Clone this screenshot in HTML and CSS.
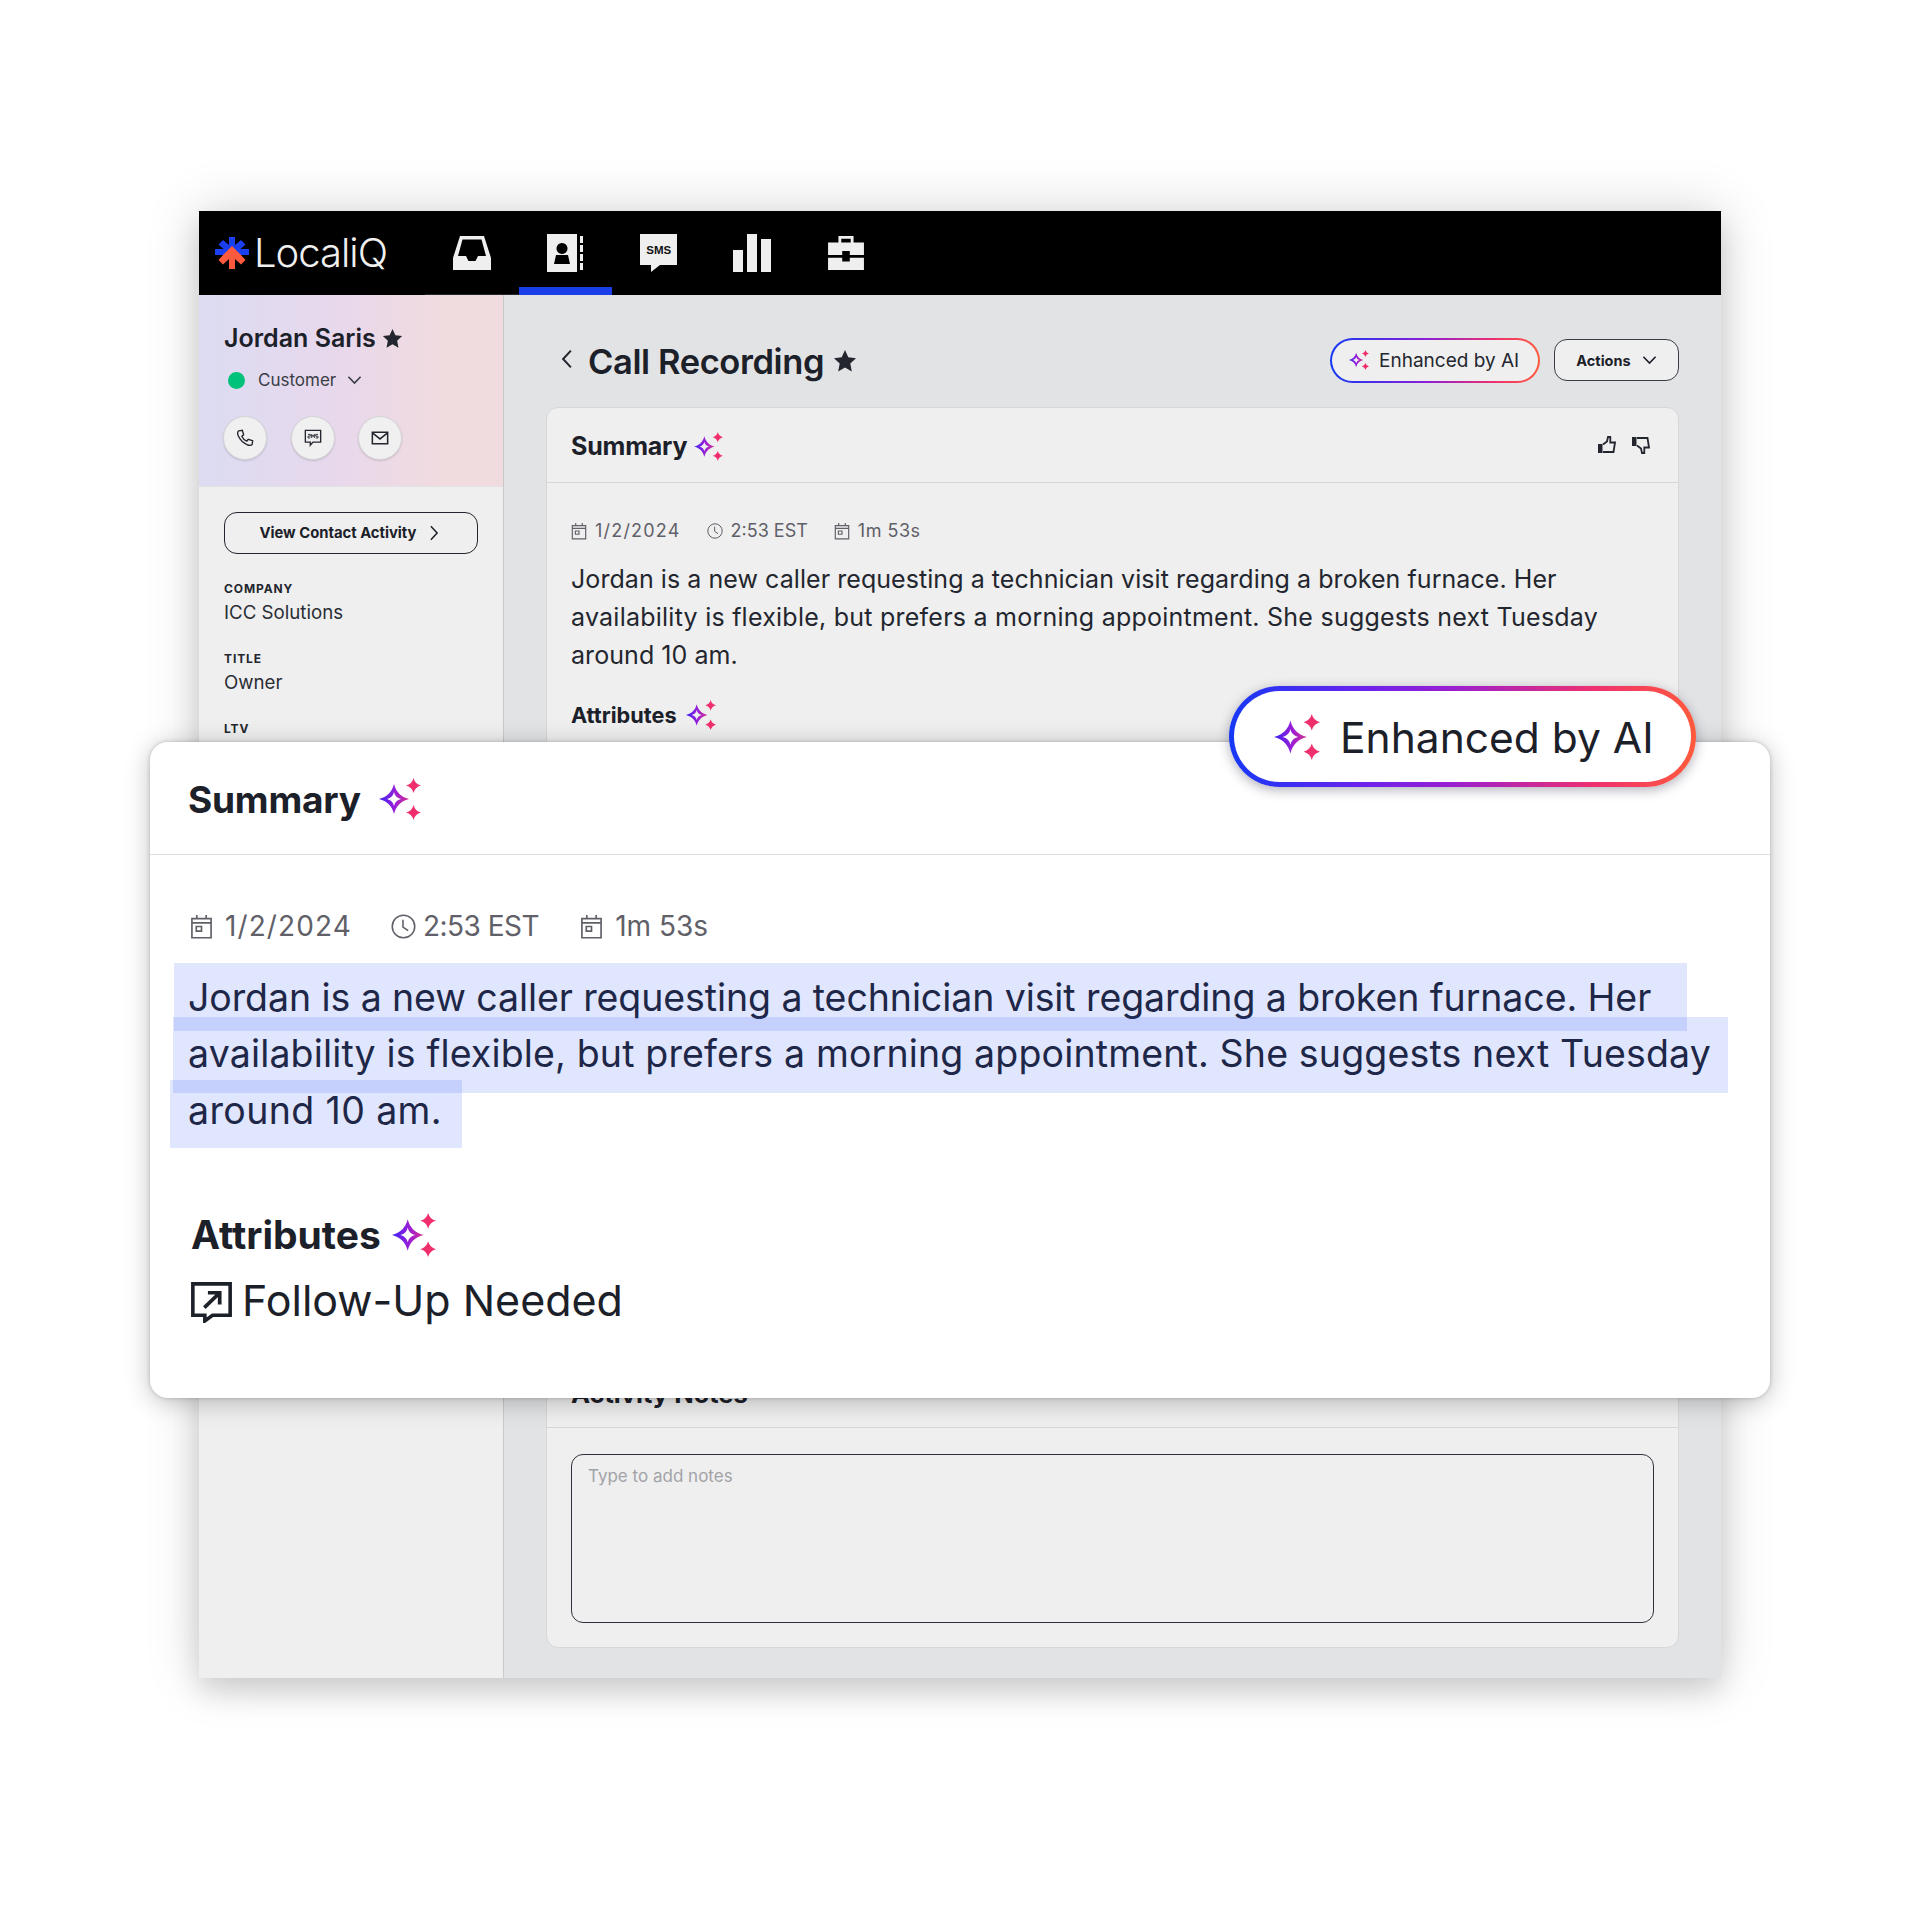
FILE: index.html
```html
<!DOCTYPE html>
<html lang="en">
<head>
<meta charset="utf-8">
<title>LocaliQ Call Recording</title>
<link rel="stylesheet" href="styles.css">
</head>
<body>
<svg class="defs" width="0" height="0" aria-hidden="true">
  <defs>
    <linearGradient id="sg" x1="0" y1="0" x2="1" y2="0">
      <stop offset="0" stop-color="#3b22f5"/><stop offset=".55" stop-color="#9a1fd6"/><stop offset="1" stop-color="#d4308f"/>
    </linearGradient>
    <symbol id="sparkle" viewBox="0 0 42 42">
      <path fill="url(#sg)" fill-rule="evenodd" d="M15 6C17 14 22 19 30 21C22 23 17 28 15 36C13 28 8 23 0 21C8 19 13 14 15 6ZM15 14C14.300 17.500 12 20 8 21C12 22 14.300 24.500 15 28C15.700 24.500 18 22 22 21C18 20 15.700 17.500 15 14Z"/>
      <path fill="#ef2f6c" d="M34.500 0C35.500 4 38 6.500 42 7.500C38 8.500 35.500 11 34.500 15C33.500 11 31 8.500 27 7.500C31 6.500 33.500 4 34.500 0Z"/>
      <path fill="#ef2f6c" d="M34.500 27C35.500 31 38 33.500 42 34.500C38 35.500 35.500 38 34.500 42C33.500 38 31 35.500 27 34.500C31 33.500 33.500 31 34.500 27Z"/>
    </symbol>
    <symbol id="cal" viewBox="0 0 22 24">
      <path fill="none" stroke="currentColor" stroke-width="1.600" d="M1.800 4.500H20.200V22.800H1.800ZM1.800 8.500H20.200M6.500 1V4.500M15.500 1V4.500M6 12H11V16.500H6Z"/>
    </symbol>
    <symbol id="clock" viewBox="0 0 24 24">
      <circle cx="12" cy="12" r="10.800" fill="none" stroke="currentColor" stroke-width="1.500"/>
      <path fill="none" stroke="currentColor" stroke-width="1.500" d="M11.500 5.500V12.500L16.500 16"/>
    </symbol>
    <symbol id="star" viewBox="0 0 24 24">
      <path fill="currentColor" d="M12 1L15.300 8.300L23 9.200L17.300 14.600L18.800 22.500L12 18.500L5.200 22.500L6.700 14.600L1 9.200L8.700 8.300Z"/>
    </symbol>
    <symbol id="chev" viewBox="0 0 16 10">
      <path fill="none" stroke="currentColor" stroke-width="1.700" d="M1.500 1.500L8 8.300L14.500 1.500"/>
    </symbol>
    <symbol id="chevr" viewBox="0 0 10 18">
      <path fill="none" stroke="currentColor" stroke-width="1.700" d="M1.500 1.500L8.500 9L1.500 16.500"/>
    </symbol>
    <symbol id="chevl" viewBox="0 0 10 18">
      <path fill="none" stroke="currentColor" stroke-width="1.800" d="M8.500 1.500L1.500 9L8.500 16.500"/>
    </symbol>
    <symbol id="thumb" viewBox="0 0 18 18">
      <path fill="currentColor" d="M0 8H4.500V17H0Z"/>
      <path fill="none" stroke="currentColor" stroke-width="1.800" d="M5 8.500L9 5.500L10 1H12.300V6.500H17L15.500 16H5"/>
    </symbol>
  </defs>
</svg>

<main class="stage">
  <div class="window">
    <nav class="topbar">
      <div class="logo">
        <svg class="logo-mark" viewBox="0 0 34 32" aria-hidden="true">
          <path fill="#1a3ff0" d="M14 0H20V8L26 3L30.500 7.500L25.500 12H34V18H0V12H8.500L3.500 7.500L8 3L14 8Z"/>
          <path fill="#ff5a3c" d="M17 9L26 18L30.500 23L26 27.500L20 22V32H14V22L8 27.500L3.500 23L8 18Z"/>
        </svg>
        <span class="logo-text">LocaliQ</span>
      </div>
      <div class="tabs">
        <div class="tab tab-idle">
          <svg class="tab-icon" viewBox="0 0 38 34" aria-hidden="true"><path fill="#efefef" fill-rule="evenodd" d="M7 0H31L38 22V34H0V22ZM9.500 3.500L5 20H13L15.500 25H22.500L25 20H33L28.500 3.500Z"/></svg>
        </div>
        <div class="tab tab-active">
          <svg class="tab-icon tall" viewBox="0 0 36 38" aria-hidden="true"><path fill="#efefef" fill-rule="evenodd" d="M0 0H30V38H0ZM15 9A5.500 5.500 0 1 0 15.010 9ZM7 30H23L21 21H9Z"/><path fill="#efefef" d="M33 2H36V9H33ZM33 11H36V18H33ZM33 20H36V27H33ZM33 29H36V36H33Z"/></svg>
        </div>
        <div class="tab">
          <div class="sms-bubble"><span>SMS</span></div>
        </div>
        <div class="tab">
          <svg class="tab-icon tall" viewBox="0 0 38 38" aria-hidden="true"><path fill="#efefef" d="M0 16H10V38H0ZM14 0H24V38H14ZM28 5H38V38H28Z"/></svg>
        </div>
        <div class="tab">
          <svg class="tab-icon" viewBox="0 0 38 36" aria-hidden="true"><path fill="#efefef" fill-rule="evenodd" d="M11 0H27V7H38V20H23V16H15V20H0V7H11ZM14 3V7H24V3ZM0 23H15V27H23V23H38V36H0Z"/></svg>
        </div>
      </div>
    </nav>

    <div class="content">
      <aside class="sidebar">
        <div class="contact-head">
          <div class="contact-name">Jordan Saris <svg class="name-star" aria-hidden="true"><use href="#star"/></svg></div>
          <div class="status"><span class="status-dot"></span><span>Customer</span><svg class="status-chev" aria-hidden="true"><use href="#chev"/></svg></div>
          <div class="round-row">
            <div class="round">
              <svg viewBox="0 0 20 20" aria-hidden="true"><path fill="none" stroke="#23262e" stroke-width="1.500" d="M3 2L7 1.500L8.500 6.500L6.500 8C7.500 10.500 9.500 12.500 12 13.500L13.500 11.500L18.500 13L18 17C17 18.500 15 18.500 12.500 17.500C8 15.500 4.500 12 2.500 7.500C1.500 5 1.500 3 3 2Z"/></svg>
            </div>
            <div class="round">
              <svg viewBox="0 0 20 20" aria-hidden="true"><path fill="none" stroke="#23262e" stroke-width="1.500" d="M1.500 1.500H18.500V14.500H10L7 18V14.500H1.500Z"/><path fill="none" stroke="#23262e" stroke-width="1" d="M4.500 6H7V8H4.500V10H7M8.500 10V6L10 8.500L11.500 6V10M15.500 6H13V8H15.500V10H13"/></svg>
            </div>
            <div class="round">
              <svg viewBox="0 0 20 20" aria-hidden="true"><path fill="none" stroke="#23262e" stroke-width="1.700" d="M1.500 3.500H18.500V16.500H1.500ZM2 4.500L10 11L18 4.500"/></svg>
            </div>
          </div>
        </div>
        <div class="contact-body">
          <button class="activity-btn">View Contact Activity <svg class="btn-chev" aria-hidden="true"><use href="#chevr"/></svg></button>
          <div class="field"><div class="field-label">COMPANY</div><div class="field-value">ICC Solutions</div></div>
          <div class="field"><div class="field-label">TITLE</div><div class="field-value">Owner</div></div>
          <div class="field"><div class="field-label">LTV</div></div>
        </div>
      </aside>

      <section class="main">
        <header class="page-head">
          <svg class="back" aria-hidden="true"><use href="#chevl"/></svg>
          <h1 class="page-title">Call Recording</h1>
          <svg class="title-star" aria-hidden="true"><use href="#star"/></svg>
          <div class="head-actions">
            <div class="pill"><svg class="pill-spark" aria-hidden="true"><use href="#sparkle"/></svg>Enhanced by AI</div>
            <button class="actions-btn">Actions <svg class="actions-chev" aria-hidden="true"><use href="#chev"/></svg></button>
          </div>
        </header>
        <div class="card">
          <div class="card-head">
            <span class="card-title">Summary</span>
            <svg class="card-spark" aria-hidden="true"><use href="#sparkle"/></svg>
            <div class="thumbs">
              <svg class="thumb" aria-hidden="true"><use href="#thumb"/></svg>
              <svg class="thumb thumb-down" aria-hidden="true"><use href="#thumb"/></svg>
            </div>
          </div>
          <div class="card-body">
            <div class="meta">
              <span class="meta-item"><svg class="meta-ic" aria-hidden="true"><use href="#cal"/></svg><span class="date-text">1/2/2024</span></span>
              <span class="meta-item"><svg class="meta-ic" aria-hidden="true"><use href="#clock"/></svg>2:53 EST</span>
              <span class="meta-item"><svg class="meta-ic" aria-hidden="true"><use href="#cal"/></svg><span class="dur-text">1m 53s</span></span>
            </div>
            <p class="para">Jordan is a new caller requesting a technician visit regarding a broken furnace. Her<br><span class="para-2">availability is flexible, but prefers a morning appointment. She suggests next Tuesday</span><br>around 10 am.</p>
            <div class="attr-head"><span>Attributes</span><svg class="attr-spark" aria-hidden="true"><use href="#sparkle"/></svg></div>
          </div>
          <div class="notes">
            <div class="notes-title">Activity Notes</div>
            <div class="notes-body">
              <div class="notes-input">Type to add notes</div>
            </div>
          </div>
        </div>
      </section>
    </div>
  </div>

  <article class="focus-card">
    <div class="focus-head">
      <span class="focus-title">Summary</span>
      <svg class="focus-spark" aria-hidden="true"><use href="#sparkle"/></svg>
    </div>
    <div class="focus-body">
      <div class="focus-meta">
        <span class="focus-meta-item"><svg class="focus-ic" aria-hidden="true"><use href="#cal"/></svg><span class="focus-date">1/2/2024</span></span>
        <span class="focus-meta-item focus-meta-time"><svg class="focus-ic focus-clock" aria-hidden="true"><use href="#clock"/></svg><span class="focus-time">2:53 EST</span></span>
        <span class="focus-meta-item"><svg class="focus-ic" aria-hidden="true"><use href="#cal"/></svg>1m 53s</span>
      </div>
      <div class="hl-block">
        <div class="hl-row"><span class="hl hl-1">Jordan is a new caller requesting a technician visit regarding a broken furnace. Her</span></div>
        <div class="hl-row"><span class="hl hl-2">availability is flexible, but prefers a morning appointment. She suggests next Tuesday</span></div>
        <div class="hl-row"><span class="hl hl-3">around 10 am.</span></div>
      </div>
      <div class="focus-attr"><span>Attributes</span><svg class="focus-attr-spark" aria-hidden="true"><use href="#sparkle"/></svg></div>
      <div class="follow">
        <svg class="follow-ic" viewBox="0 0 40 40" aria-hidden="true"><path fill="none" stroke="#1c2029" stroke-width="3.500" d="M1.800 1.800H38.200V32.500H21L13.500 38V32.500H1.800Z"/><path fill="none" stroke="#1c2029" stroke-width="3.600" d="M13 25L27 11.500M16.500 10.500H28V22"/></svg>
        <span>Follow-Up Needed</span>
      </div>
    </div>
  </article>

  <div class="badge"><svg class="badge-spark" aria-hidden="true"><use href="#sparkle"/></svg><span class="badge-text">Enhanced by AI</span></div>
</main>
</body>
</html>
```

FILE: styles.css
```css
* { box-sizing: border-box; }
html, body { margin: 0; padding: 0; background: #fff; }
body { font-family: Inter, "Liberation Sans", sans-serif; color: #1c2029; }
.defs { position: absolute; }
button { font-family: inherit; color: inherit; }

.stage { position: relative; width: 1920px; height: 1920px; padding: 211px 199px 0 199px; overflow: hidden; }

.window { width: 1522px; height: 1467px; display: flex; flex-direction: column; background: #efefef; box-shadow: 0 0 50px rgba(0,0,0,.17), 0 14px 26px rgba(0,0,0,.12); }

.topbar { height: 84px; background: #000; display: flex; flex: none; }
.logo { width: 226px; padding: 0 0 2px 16px; display: flex; align-items: center; gap: 5px; }
.logo-mark { width: 34px; height: 32px; margin-top: 2px; }
.logo-text { font-size: 40px; font-weight: 300; color: #efefef; letter-spacing: -1px; }
.tabs { display: flex; }
.tab { width: 93.500px; height: 84px; display: flex; align-items: center; justify-content: center; }
.tab-idle { border-bottom: 1px solid #26282e; }
.tab-active { border-bottom: 8px solid #1a3fe8; padding-top: 8px; }
.tab-icon { width: 38px; height: 34px; }
.tab-icon.tall { height: 38px; }
.sms-bubble { position: relative; width: 37px; height: 31px; margin-bottom: 7px; background: #efefef; display: flex; align-items: center; justify-content: center; }
.sms-bubble::after { content: ""; position: absolute; left: 11px; top: 31px; border-top: 7px solid #efefef; border-right: 9px solid transparent; }
.sms-bubble span { font-size: 11.500px; font-weight: 800; color: #111; font-family: "Liberation Sans", sans-serif; }

.content { flex: 1; display: flex; min-height: 0; }
.sidebar { width: 305px; flex: none; border-right: 1px solid #c9cacc; background: #efefef; }
.contact-head { height: 192px; padding: 28px 25px 0; background: linear-gradient(90deg, #dcdcf2 0%, #e8d8ec 45%, #f0dbdf 80%, #f0dbdf 100%); border-bottom: 1px solid #e2e2e4; }
.contact-name { display: flex; align-items: center; gap: 6px; font-size: 25px; font-weight: 600; line-height: 30px; }
.name-star { width: 21px; height: 21px; color: #23262e; }
.status { display: flex; align-items: center; margin: 15px 0 0 4px; font-size: 17px; line-height: 24px; color: #3a3d46; }
.status-dot { width: 17px; height: 17px; border-radius: 50%; background: #00c27a; margin-right: 13px; }
.status-chev { width: 15px; height: 10px; margin-left: 11px; }
.round-row { display: flex; gap: 23.500px; margin: 24px 0 0 -1px; }
.round { width: 44px; height: 44px; border-radius: 50%; background: #f0f0f0; border: 1px solid #d5d5d8; box-shadow: 0 1px 2px rgba(0,0,0,.15); display: flex; align-items: center; justify-content: center; }
.round svg { width: 18px; height: 18px; }
.contact-body { padding: 25px 25px 0; }
.activity-btn { width: 254px; height: 42px; border: 1.500px solid #23262e; border-radius: 13px; background: transparent; font-size: 14.800px; font-weight: 700; display: flex; align-items: center; justify-content: center; gap: 12px; padding: 0 4px 0 0; }
.btn-chev { width: 10px; height: 16px; }
.field { margin-top: 26px; }
.contact-body .field:first-of-type { margin-top: 27px; }
.field-label { font-size: 12px; font-weight: 700; line-height: 16px; letter-spacing: .9px; color: #23262e; }
.field-value { font-size: 18.700px; line-height: 24px; color: #2a2d35; margin-top: 4px; }

.main { flex: 1; background: #e2e3e5; padding: 0 42px 30px 42px; display: flex; flex-direction: column; min-width: 0; }
.page-head { height: 112px; flex: none; display: flex; align-items: center; padding: 20px 0 0 15px; }
.back { width: 12px; height: 20px; color: #23262e; margin-right: 15px; margin-top: -4px; }
.page-title { margin: 0; font-size: 34.500px; font-weight: 600; letter-spacing: -.4px; }
.title-star { width: 24px; height: 24px; margin-left: 9px; color: #23262e; }
.head-actions { margin-left: auto; display: flex; align-items: center; gap: 14px; margin-top: -2px; }
.pill { width: 210px; height: 45px; border: 2.500px solid transparent; border-radius: 23px; display: flex; align-items: center; padding-left: 17px; gap: 10px; font-size: 19px; color: #23262e; background: linear-gradient(#efefef,#efefef) padding-box, linear-gradient(90deg,#1539f5,#8a1fd8 45%,#ee3070 78%,#ff5a3c) border-box; }
.pill-spark { width: 20px; height: 20px; }
.actions-btn { width: 125px; height: 42px; border: 1.500px solid #3a3d46; border-radius: 13px; background: #efefef; font-size: 14.500px; font-weight: 700; display: flex; align-items: center; justify-content: center; gap: 11px; padding: 0; }
.actions-chev { width: 15px; height: 10px; }

.card { flex: 1; background: #efefef; border: 1px solid #d7d7d9; border-radius: 12px; display: flex; flex-direction: column; min-height: 0; }
.card-head { height: 75px; flex: none; display: flex; align-items: center; padding: 2px 28px 0 24px; border-bottom: 1px solid #d7d7d9; }
.card-title { font-size: 25px; font-weight: 700; letter-spacing: -.2px; }
.card-spark { width: 29px; height: 29px; margin-left: 7px; }
.thumbs { margin-left: auto; display: flex; gap: 16px; margin-top: -3px; }
.thumb { width: 18px; height: 18px; color: #23262e; }
.thumb-down { transform: rotate(180deg) scaleX(-1); }
.card-body { padding: 35px 24px 0; }
.meta { display: flex; gap: 26px; font-size: 18px; line-height: 26px; color: #5f6068; }
.meta-item { display: flex; align-items: center; gap: 8px; }
.meta-ic { width: 16px; height: 18px; }
.date-text { letter-spacing: 1.200px; }
.dur-text { letter-spacing: .5px; }
.para { margin: 16px 0 0; font-size: 25px; line-height: 38px; letter-spacing: .06px; color: #23262e; }
.para-2 { letter-spacing: .24px; }
.attr-head { display: flex; align-items: center; margin-top: 26px; font-size: 21.700px; font-weight: 700; line-height: 26px; }
.attr-spark { width: 30px; height: 30px; margin-left: 9px; }
.notes { margin-top: auto; }
.notes-title { padding: 0 24px 19px; font-size: 25.500px; font-weight: 700; line-height: 28px; border-bottom: 1px solid #d7d7d9; }
.notes-body { padding: 26px 24px 24px; }
.notes-input { height: 169px; border: 1.500px solid #2f323b; border-radius: 12px; padding: 11px 16px; font-size: 17px; color: #a2a3a8; }

.focus-card { position: absolute; left: 150px; top: 742px; width: 1620px; height: 656px; background: #fff; border-radius: 18px; box-shadow: 0 0 4px rgba(0,0,0,.2), 0 4px 26px rgba(0,0,0,.24); }
.focus-head { height: 113px; display: flex; align-items: center; padding: 2px 38px 0; border-bottom: 1px solid #dfdfe1; }
.focus-title { font-size: 37px; font-weight: 700; letter-spacing: -.2px; }
.focus-spark { width: 42px; height: 42px; margin-left: 18px; }
.focus-body { padding: 52px 38px 0; }
.focus-meta { display: flex; gap: 37px; font-size: 28px; line-height: 38px; color: #5f6068; }
.focus-meta-item { display: flex; align-items: center; gap: 12px; }
.focus-meta-time { gap: 7px; }
.focus-ic { width: 23px; height: 25px; margin-left: 2px; }
.focus-clock { width: 25px; height: 25px; margin-left: 2px; }
.focus-date { letter-spacing: 1.100px; }
.focus-time { letter-spacing: -.5px; margin-right: 2px; }
.hl-block { margin: 18px 0 0 -14px; font-size: 37.500px; color: #1e2747; }
.hl-row { line-height: 0; }
.hl { display: inline-block; background: rgba(53,90,250,.153); white-space: nowrap; line-height: 56px; vertical-align: top; }
.hl-1 { padding: 7px 36px 5px 14px; letter-spacing: -.09px; }
.hl-2 { padding: 9px 17px 11px 15px; margin-left: -1px; margin-top: -14px; letter-spacing: .155px; }
.hl-3 { padding: 3px 20px 9px 18px; margin-left: -4px; margin-top: -13px; letter-spacing: .38px; }
.focus-attr { display: flex; align-items: center; margin: 64px 0 0 3px; font-size: 39px; font-weight: 700; line-height: 46px; }
.focus-attr-spark { width: 44px; height: 44px; margin-left: 11px; }
.follow { display: flex; align-items: center; gap: 10px; margin: 17px 0 0 3px; font-size: 43px; line-height: 50px; color: #1c2029; }
.follow-ic { width: 41px; height: 41px; margin-top: 5px; }

.badge { position: absolute; left: 1229px; top: 686px; width: 467px; height: 101px; border: 5px solid transparent; border-radius: 51px; display: flex; align-items: center; padding-left: 40px; gap: 20px; font-size: 42.500px; color: #1c2029; background: linear-gradient(#fff,#fff) padding-box, linear-gradient(90deg,#1539f5,#6a22ee 28%,#9a1fd0 48%,#ee3070 78%,#ff5a3c) border-box; box-shadow: 0 3px 12px rgba(30,30,60,.35); }
.badge-spark { width: 46px; height: 46px; }
.badge-text { margin-top: 2px; }
```
